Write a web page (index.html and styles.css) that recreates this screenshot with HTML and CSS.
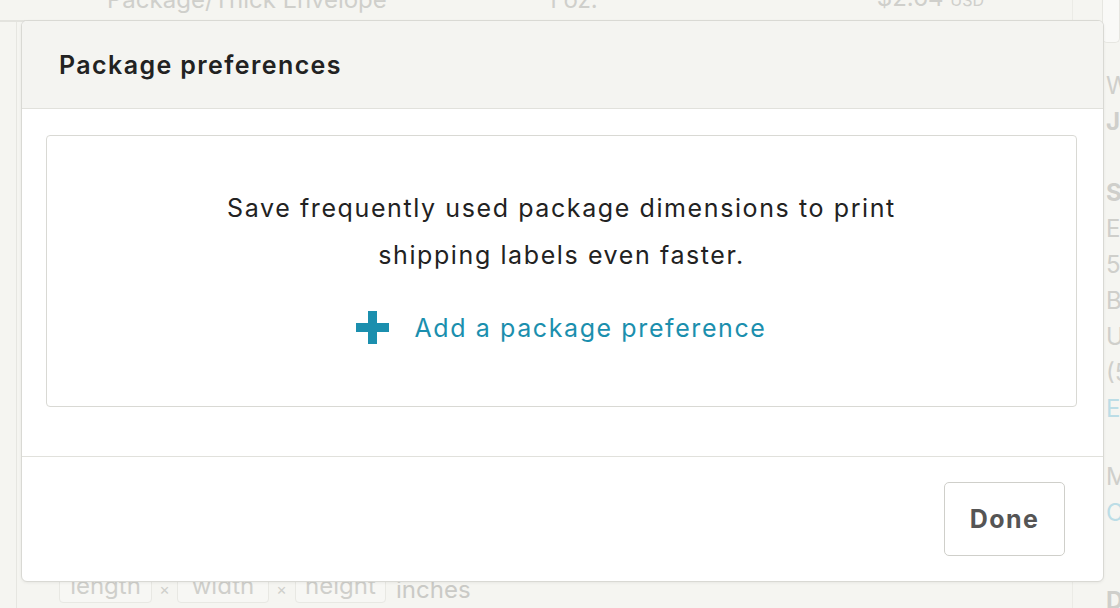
FILE: index.html
```html
<!DOCTYPE html>
<html lang="en">
<head>
  <meta charset="UTF-8">
  <title>Package preferences</title>
  <link rel="stylesheet" href="styles.css">
</head>
<body>

  <div class="page">
    <div class="main">
      <div class="row-top">
        <span class="cell-name">Package/Thick Envelope</span>
        <span class="cell-weight">1 oz.</span>
        <span class="cell-price">$2.64 <small>USD</small></span>
      </div>
      <div class="main-body"></div>
      <div class="dims">
        <span class="dim dim-l">length</span>
        <span class="times">×</span>
        <span class="dim dim-w">width</span>
        <span class="times">×</span>
        <span class="dim dim-h">height</span>
        <span class="unit">inches</span>
      </div>
    </div>
    <div class="side">
      <div class="side-input"></div>
      <div class="side-line">W</div>
      <div class="side-line strong">Ja</div>
      <div class="side-line strong gap">S</div>
      <div class="side-line">E</div>
      <div class="side-line">5</div>
      <div class="side-line">B</div>
      <div class="side-line">U</div>
      <div class="side-line">(5</div>
      <div class="side-line link">E</div>
      <div class="side-line gap-sm">M</div>
      <div class="side-line link">C</div>
      <div class="side-line strong gap-lg">D</div>
    </div>
  </div>

  <div class="modal">
    <div class="modal-head">
      <h2>Package preferences</h2>
    </div>
    <div class="modal-body">
      <div class="empty">
        <p>Save frequently used package dimensions to print<br>shipping labels even faster.</p>
        <a class="add" href="#">
          <svg width="33" height="33" viewBox="0 0 33 33"><path d="M12 0h9v12h12v9H21v12h-9V21H0v-9h12z" fill="#1b8fae"/></svg>
          <span>Add a package preference</span>
        </a>
      </div>
    </div>
    <div class="modal-foot">
      <button class="done">Done</button>
    </div>
  </div>

</body>
</html>
```

FILE: styles.css
```css
body { margin: 0; background: #f5f5f1; font-family: Inter, "Noto Sans", Arial, sans-serif; overflow: hidden; }

/* faded page behind the dialog */
.page { display: flex; height: 608px; color: #cfcfcb; }
.main { flex-shrink: 0; width: 1072px; border-right: 1px solid #ebebe6; display: flex; flex-direction: column; }
.row-top { height: 20px; border-bottom: 2px solid #e3e3de; display: flex; align-items: flex-end; font-size: 24px; line-height: 24px; overflow: hidden; }
.row-top span { position: relative; top: -8px; }
.cell-name { margin-left: 107px; width: 440px; }
.cell-weight { width: 300px; }
.cell-price { width: 137px; text-align: right; }
.cell-price small { font-size: 16px; }
.main-body { flex: 1; margin-left: 16px; border-left: 1px solid #e6e6e1; }
.dims { display: flex; align-items: center; height: 30px; padding-bottom: 4px; margin-left: 16px; padding-left: 42px; border-left: 1px solid #e6e6e1; font-size: 24px; }
.dim { box-sizing: border-box; height: 28px; line-height: 20px; border: 1px solid #e8e8e3; border-radius: 4px; background: #f7f7f4; text-align: center; }
.dim-l { width: 93px; }
.dim-w { width: 92px; }
.dim-h { width: 91px; margin-right: 10px; }
.times { width: 25px; text-align: center; font-size: 16px; }
.times + .dim-h { margin-left: 1px; }
.unit { color: #cacac6; }
.side { flex: 1; min-width: 0; overflow: hidden; padding-left: 33px; font-size: 24px; line-height: 36px; white-space: nowrap; }
.side-input { height: 42px; margin: 0 0 25px -4px; border: 1px solid #e6e6e1; border-top: 0; border-radius: 0 0 5px 5px; background: #f9f9f7; }
.side-line { height: 36px; }
.strong { font-weight: 700; }
.gap { margin-top: 35px; }
.gap-sm { margin-top: 32px; }
.gap-lg { margin-top: 52px; }
.link { color: #bcdde6; }

/* dialog */
.modal { position: absolute; left: 21px; top: 20px; width: 1081px; height: 560px; background: #fff; border: 1px solid #d9d9d4; border-radius: 6px; box-shadow: 0 1px 3px rgba(0,0,0,0.06); display: flex; flex-direction: column; overflow: hidden; }
.modal-head { height: 87px; background: #f4f4f1; border-bottom: 1px solid #e1e1dc; display: flex; align-items: center; padding-left: 37px; }
.modal-head h2 { margin: 0; font-size: 25px; font-weight: 600; color: #222; letter-spacing: 1.4px; }
.modal-body { padding: 26px 26px 49px 24px; border-bottom: 1px solid #e1e1dc; }
.empty { height: 270px; border: 1px solid #d9d9d4; border-radius: 4px; display: flex; flex-direction: column; align-items: center; }
.empty p { margin: 49px 0 0; text-align: center; font-size: 25px; line-height: 47px; color: #222; letter-spacing: 1.6px; }
.add { margin-top: 32px; display: flex; align-items: center; gap: 25px; color: #1b8fae; text-decoration: none; font-size: 25px; letter-spacing: 1.6px; }
.modal-foot { flex: 1; display: flex; justify-content: flex-end; align-items: flex-start; padding: 25px 38px 0 0; }
.done { width: 121px; height: 74px; background: #fff; border: 1px solid #cfcfca; border-radius: 5px; font-family: inherit; font-size: 25px; font-weight: 700; color: #555; letter-spacing: 1.4px; }
```
